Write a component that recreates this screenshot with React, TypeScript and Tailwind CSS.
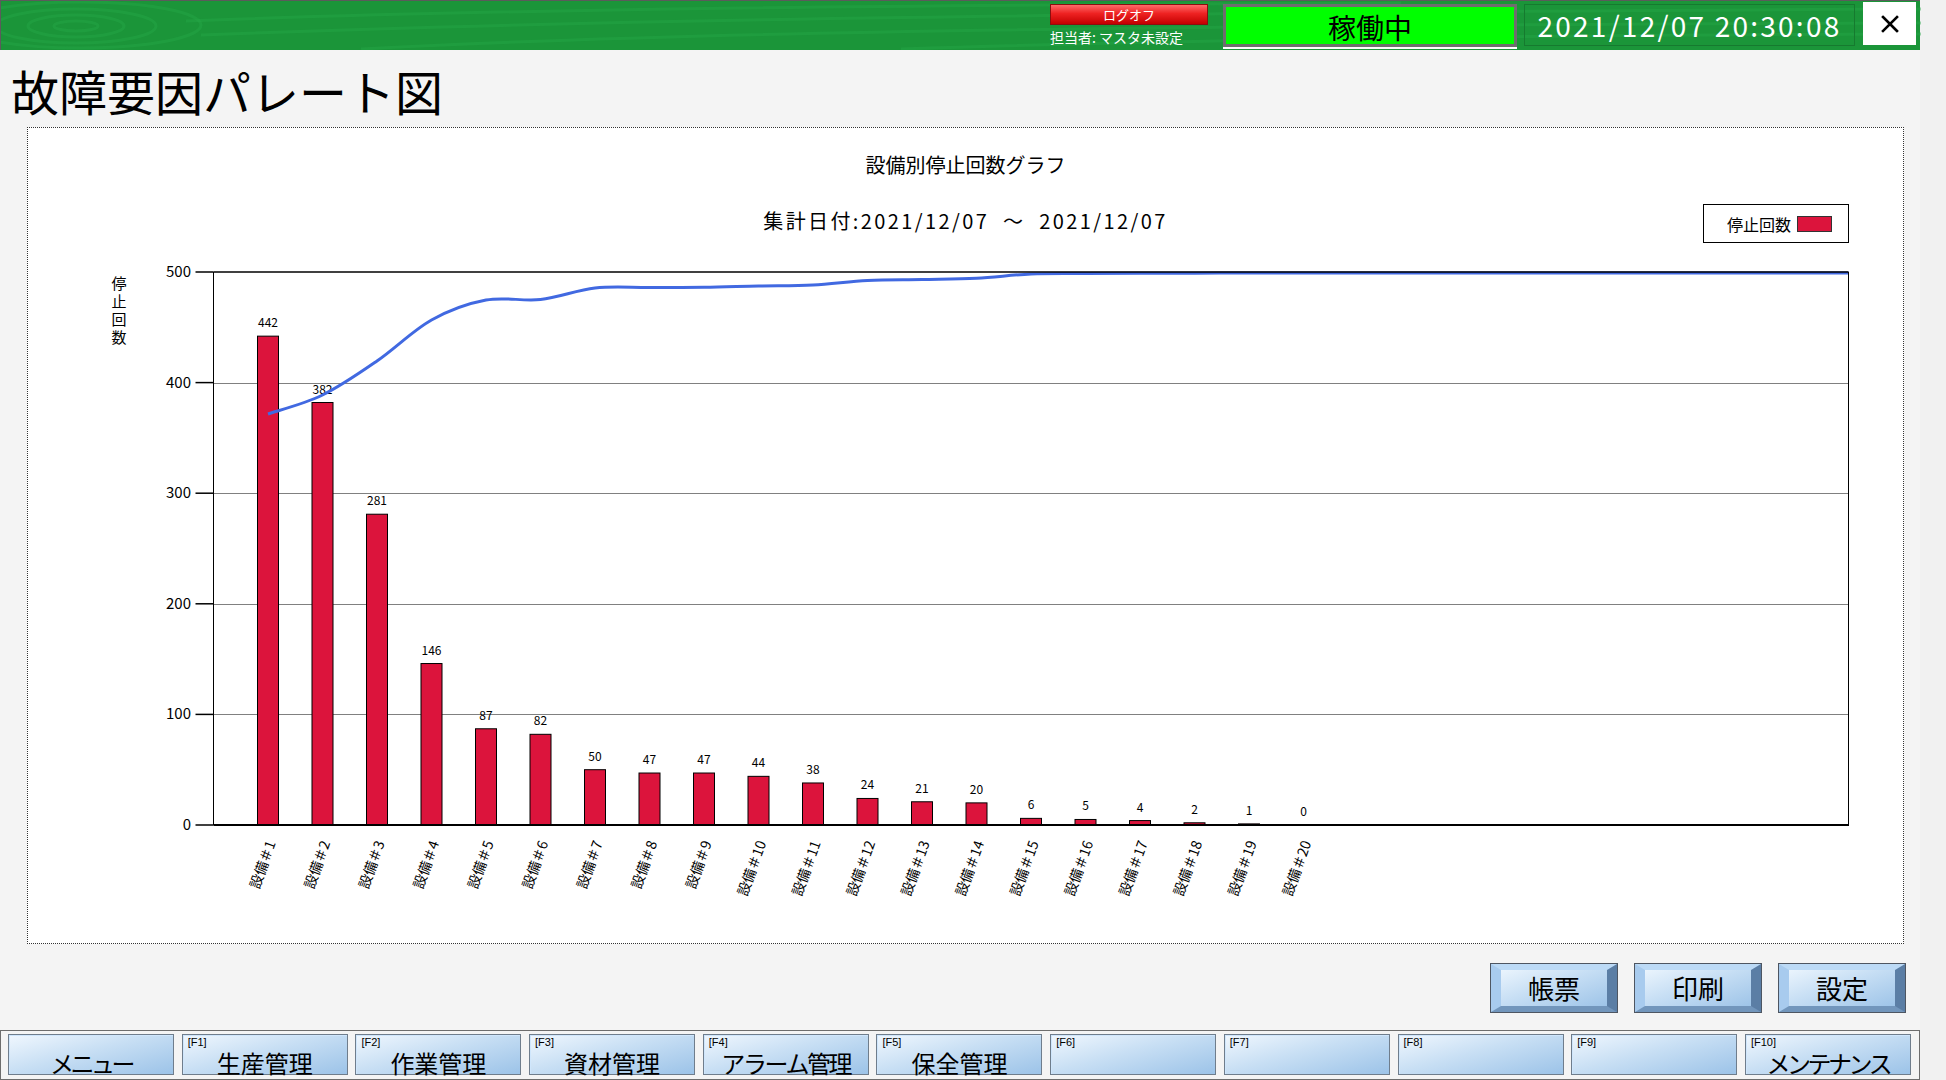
import React from 'react'

const JP = "font-['Noto_Sans_CJK_JP',sans-serif]"
const SVG_FONT = "'Noto Sans CJK JP', sans-serif"

const DATA = [442, 382, 281, 146, 87, 82, 50, 47, 47, 44, 38, 24, 21, 20, 6, 5, 4, 2, 1, 0]

// y (svg space) of the smoothed curve at slots 1..30
const CURVE = [
  164, 145, 111, 70, 50, 49.5, 38, 37.5, 37.3, 36, 35, 30.5, 29.5, 28.3, 24, 23.5, 23.3, 23.2, 23, 23,
  23, 23, 23, 23, 23, 23, 23, 23, 23, 23,
]

const PLOT_L = 185.5
const PLOT_R = 1820.5
const PLOT_T = 22
const PLOT_B = 575
const PITCH = (PLOT_R - PLOT_L) / 30
const PX_PER = (PLOT_B - PLOT_T) / 500

const cx = (i: number) => PLOT_L + PITCH * i
const vy = (v: number) => PLOT_B - v * PX_PER

function splinePath(pts: [number, number][]) {
  let d = `M${pts[0][0]},${pts[0][1]}`
  for (let i = 0; i < pts.length - 1; i++) {
    const p0 = pts[i - 1] ?? pts[i]
    const p1 = pts[i]
    const p2 = pts[i + 1]
    const p3 = pts[i + 2] ?? p2
    const c1x = p1[0] + (p2[0] - p0[0]) / 6
    const c1y = p1[1] + (p2[1] - p0[1]) / 6
    const c2x = p2[0] - (p3[0] - p1[0]) / 6
    const c2y = p2[1] - (p3[1] - p1[1]) / 6
    d += ` C${c1x},${c1y} ${c2x},${c2y} ${p2[0]},${p2[1]}`
  }
  return d
}

// the original UI font is narrow on katakana, so tighten those labels
const FKEYS: { key: string; label: string; tight?: string }[] = [
  { key: '', label: 'メニュー', tight: 'tracking-[-3.5px]' },
  { key: '[F1]', label: '生産管理' },
  { key: '[F2]', label: '作業管理' },
  { key: '[F3]', label: '資材管理' },
  { key: '[F4]', label: 'アラーム管理', tight: 'tracking-[-2.4px]' },
  { key: '[F5]', label: '保全管理' },
  { key: '[F6]', label: '' },
  { key: '[F7]', label: '' },
  { key: '[F8]', label: '' },
  { key: '[F9]', label: '' },
  { key: '[F10]', label: 'メンテナンス', tight: 'tracking-[-3.5px]' },
]

function HeaderTexture() {
  return (
    <svg className="pointer-events-none absolute inset-0" width="1920" height="49" aria-hidden>
      <g fill="none" stroke="#25a646" strokeOpacity="0.45" strokeWidth="3">
        <ellipse cx="75" cy="25" rx="22" ry="5" />
        <ellipse cx="75" cy="25" rx="48" ry="11" />
        <ellipse cx="75" cy="25" rx="80" ry="17" />
        <ellipse cx="80" cy="24" rx="120" ry="23" />
        <path d="M185 20 C 500 8, 900 4, 1400 2" />
        <path d="M200 34 C 600 18, 1100 12, 1920 8" />
        <path d="M360 48 C 700 30, 1200 24, 1920 22" />
        <path d="M900 48 C 1200 38, 1600 34, 1920 33" />
      </g>
    </svg>
  )
}

function ParetoChart() {
  const linePts: [number, number][] = CURVE.map((y, i) => [cx(i + 1), y])
  const gridVals = [400, 300, 200, 100]
  const tickVals = [500, 400, 300, 200, 100, 0]
  const crisp = (y: number) => Math.round(y) + 0.5

  return (
    <svg width="1875" height="693" className="block">
      {/* y-axis title */}
      {['停', '止', '回', '数'].map((c, i) => (
        <text
          key={c}
          x="91"
          y={39 + i * 18}
          textAnchor="middle"
          fontSize="15"
          fontFamily={SVG_FONT}
          fill="#000"
        >
          {c}
        </text>
      ))}

      {/* grid */}
      {gridVals.map((v) => (
        <line
          key={v}
          x1={PLOT_L}
          x2={PLOT_R}
          y1={crisp(vy(v))}
          y2={crisp(vy(v))}
          stroke="#000"
          strokeWidth="1"
          strokeDasharray="1 1"
        />
      ))}

      {/* ticks + labels */}
      {tickVals.map((v) => (
        <g key={v}>
          <line x1="167.5" x2={PLOT_L} y1={vy(v)} y2={vy(v)} stroke="#000" strokeWidth="1.5" />
          <text
            x="163"
            y={vy(v) + 5}
            textAnchor="end"
            fontSize="15"
            fontFamily={SVG_FONT}
            fill="#000"
          >
            {v}
          </text>
        </g>
      ))}

      {/* bars */}
      {DATA.map((v, i) => {
        const c = cx(i + 1)
        const top = vy(v)
        return (
          <g key={i}>
            {v > 0 ? (
              <rect
                x={c - 10.5}
                y={top}
                width="21"
                height={PLOT_B - top}
                fill="#DC143C"
                stroke="#000"
                strokeWidth="1"
              />
            ) : null}
            <text
              x={c}
              y={top - 9}
              textAnchor="middle"
              fontSize="12"
              fontFamily={SVG_FONT}
              fill="#000"
            >
              {v}
            </text>
            <text
              x={c + 8}
              y="593"
              textAnchor="end"
              fontSize="14"
              fontFamily={SVG_FONT}
              fill="#000"
              transform={`rotate(-70 ${c + 8} 593)`}
            >
              {`設備＃${i + 1}`}
            </text>
          </g>
        )
      })}

      {/* cumulative curve */}
      <path d={splinePath(linePts)} fill="none" stroke="#4169E1" strokeWidth="3" strokeLinejoin="round" />

      {/* plot frame */}
      <line x1={PLOT_L} x2={PLOT_R} y1={PLOT_T} y2={PLOT_T} stroke="#000" strokeWidth="1.5" />
      <line x1={PLOT_R} x2={PLOT_R} y1={PLOT_T} y2={PLOT_B} stroke="#000" strokeWidth="1" />
      <line x1={PLOT_L} x2={PLOT_L} y1={PLOT_T} y2={PLOT_B} stroke="#000" strokeWidth="1" />
      <line x1={PLOT_L} x2={PLOT_R + 0.5} y1={PLOT_B} y2={PLOT_B} stroke="#000" strokeWidth="2" />
    </svg>
  )
}

function BevelButton({ label }: { label: string }) {
  return (
    <button
      type="button"
      className={`flex h-[48px] w-[126px] items-center justify-center border-x-[10px] border-y-[6px] border-t-[#bcdaf6] border-l-[#a8cbee] border-r-[#5b7ea5] border-b-[#7296bc] bg-[linear-gradient(160deg,#eaf4fd_0%,#c6def4_45%,#9ec4e8_100%)] text-[26px] leading-none text-black shadow-[0_0_0_1px_#4e5662] ${JP}`}
    >
      {label}
    </button>
  )
}

function FKeyButton({ keyName, label, tight }: { keyName: string; label: string; tight?: string }) {
  return (
    <button
      type="button"
      className="relative flex h-[41px] w-[166px] shrink-0 items-end justify-center border border-[#6f7d8c] bg-[linear-gradient(165deg,#f0f7fe_0%,#c8dff4_45%,#9cc3e8_100%)] pb-[1px] shadow-[inset_1px_1px_0_#cfe6fc]"
    >
      {keyName ? (
        <span className="absolute left-[5px] top-[2px] font-['Liberation_Sans',sans-serif] text-[11px] leading-[11px] text-black">
          {keyName}
        </span>
      ) : null}
      <span className={`text-[24px] leading-[20px] text-black ${tight ?? ''} ${JP}`}>{label}</span>
    </button>
  )
}

export default function App() {
  return (
    <div className="min-h-screen w-[1946px] bg-[#f1f1f1]">
      <div className={`flex h-[1080px] w-[1920px] flex-col bg-[#f4f4f4] ${JP}`}>
        {/* header */}
        <header className="relative flex h-[50px] items-start justify-end border-l border-t border-[#5b5b5b] bg-[#1b9539] pr-[4px]">
          <HeaderTexture />
          <div className="relative mt-[3px] w-[158px]">
            <button
              type="button"
              className="flex h-[21px] w-full items-center justify-center border border-[#8a0f0f] bg-[linear-gradient(180deg,#ff6a6a_0%,#ee2222_45%,#c40000_100%)] text-[13px] leading-none text-white"
            >
              ログオフ
            </button>
            <p className="mt-[5px] whitespace-nowrap text-[14px] leading-[14px] text-white">担当者: マスタ未設定</p>
          </div>
          <div className="relative ml-[15px] mt-[3px] flex h-[43px] w-[294px] items-center justify-center border-[3px] border-[#6e6e6e] bg-[#00ff00] pt-[3px] text-[28px] leading-none text-black shadow-[0_2px_0_0_#ffffff]">
            稼働中
          </div>
          <div className="relative ml-[7px] mt-[3px] flex h-[42px] w-[331px] items-center justify-center border border-[#167a2f] text-[28px] leading-none tracking-[0.08em] text-white">
            2021/12/07 20:30:08
          </div>
          <button
            type="button"
            className="relative ml-[8px] mt-[1px] flex h-[43px] w-[53px] items-center justify-center bg-white"
            aria-label="close"
          >
            <svg width="18" height="18" viewBox="0 0 18 18">
              <path d="M2 2 L16 16 M16 2 L2 16" stroke="#000" strokeWidth="2.6" strokeLinecap="square" />
            </svg>
          </button>
        </header>

        {/* page title */}
        <div className="h-[77px] pl-[11px] pt-[14px]">
          <h1 className="text-[48px] leading-[52px] text-black">故障要因パレート図</h1>
        </div>

        {/* chart panel */}
        <div className="ml-[27px] h-[817px] w-[1877px] border border-dotted border-[#333] bg-white">
          <div className="h-[62px] pt-[27px] text-center text-[20px] leading-[20px] text-black">設備別停止回数グラフ</div>
          <div className="grid h-[60px] grid-cols-[1fr_auto_1fr] items-start">
            <div />
            <div className="whitespace-pre pt-[21px] text-[20px] leading-[20px] tracking-[2.4px] text-black">
              集計日付:2021/12/07  ～  2021/12/07
            </div>
            <div className="mr-[54px] mt-[14px] flex h-[39px] w-[146px] items-center justify-self-end border border-black pl-[23px]">
              <span className="text-[16px] leading-none text-black">停止回数</span>
              <span className="ml-[6px] h-[16px] w-[35px] border border-[#333] bg-[#DC143C]" />
            </div>
          </div>
          <ParetoChart />
        </div>

        {/* action buttons */}
        <div className="mt-[20px] flex justify-end gap-[18px] pr-[15px]">
          <BevelButton label="帳票" />
          <BevelButton label="印刷" />
          <BevelButton label="設定" />
        </div>

        {/* function keys */}
        <footer className="mt-auto flex h-[50px] gap-[7.7px] border border-[#6d6d6d] bg-[#f4f4f4] pl-[7px] pt-[3px]">
          {FKEYS.map((f, i) => (
            <FKeyButton key={i} keyName={f.key} label={f.label} tight={f.tight} />
          ))}
        </footer>
      </div>
    </div>
  )
}
